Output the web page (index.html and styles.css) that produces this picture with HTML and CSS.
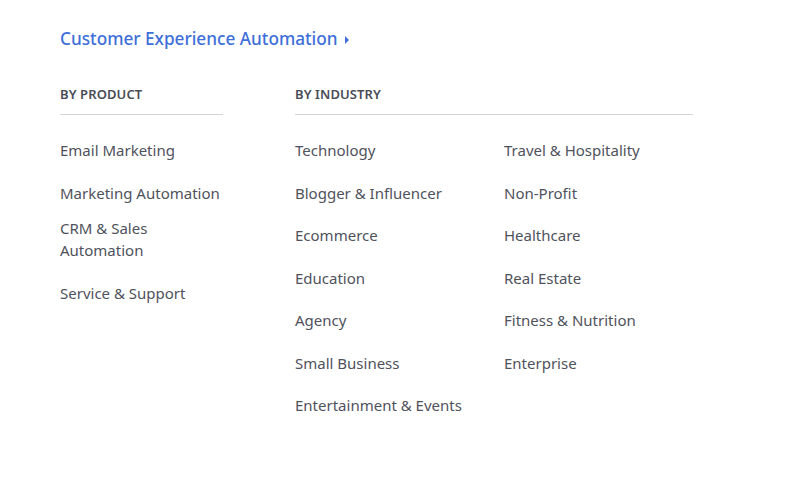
FILE: index.html
```html
<!DOCTYPE html>
<html lang="en">
<head>
<meta charset="utf-8">
<title>Menu</title>
<link rel="stylesheet" href="styles.css">
</head>
<body>
<div class="menu">
  <a class="menu-title" href="#">Customer Experience Automation <span class="caret"></span></a>
  <div class="columns">
    <section class="group group-product">
      <h3 class="group-head">By Product</h3>
      <ul class="list">
        <li class="item">Email Marketing</li>
        <li class="item">Marketing Automation</li>
        <li class="item item-tight">CRM &amp; Sales Automation</li>
        <li class="item">Service &amp; Support</li>
      </ul>
    </section>
    <section class="group group-industry">
      <h3 class="group-head">By Industry</h3>
      <div class="sublists">
        <ul class="list list-a">
          <li class="item">Technology</li>
          <li class="item">Blogger &amp; Influencer</li>
          <li class="item">Ecommerce</li>
          <li class="item">Education</li>
          <li class="item">Agency</li>
          <li class="item">Small Business</li>
          <li class="item">Entertainment &amp; Events</li>
        </ul>
        <ul class="list">
          <li class="item">Travel &amp; Hospitality</li>
          <li class="item">Non-Profit</li>
          <li class="item">Healthcare</li>
          <li class="item">Real Estate</li>
          <li class="item">Fitness &amp; Nutrition</li>
          <li class="item">Enterprise</li>
        </ul>
      </div>
    </section>
  </div>
</div>
</body>
</html>
```
FILE: styles.css
```css
html, body {
  margin: 0;
  padding: 0;
  background: #ffffff;
}
body {
  font-family: "Noto Sans", "Open Sans", sans-serif;
  color: #4f525c;
}
.menu {
  padding: 27px 0 0 60px;
}
.menu-title {
  display: inline-flex;
  align-items: center;
  gap: 7px;
  font-size: 17.2px;
  line-height: 24px;
  color: #3e6fd9;
  text-decoration: none;
  font-weight: 500;
}
.caret {
  width: 0;
  height: 0;
  border-top: 4.5px solid transparent;
  border-bottom: 4.5px solid transparent;
  border-left: 4.5px solid #3e6fd9;
  margin-top: 1px;
}
.columns {
  display: flex;
  gap: 72px;
  margin-top: 34px;
}
.group-product {
  width: 163px;
}
.group-industry {
  width: 398px;
}
.group-head {
  margin: 0;
  font-size: 13px;
  line-height: 18px;
  font-weight: 600;
  text-transform: uppercase;
  letter-spacing: 0.1px;
  color: #4a4c56;
  padding-bottom: 11px;
  border-bottom: 1px solid #d4d5d9;
}
.sublists {
  display: flex;
}
.list-a {
  width: 209px;
}
.list {
  list-style: none;
  margin: 0;
  padding: 24px 0 0 0;
  display: flex;
  flex-direction: column;
  gap: 20.5px;
}
.item {
  font-size: 15px;
  line-height: 22px;
}
.item-tight {
  margin-top: -7px;
}
```
